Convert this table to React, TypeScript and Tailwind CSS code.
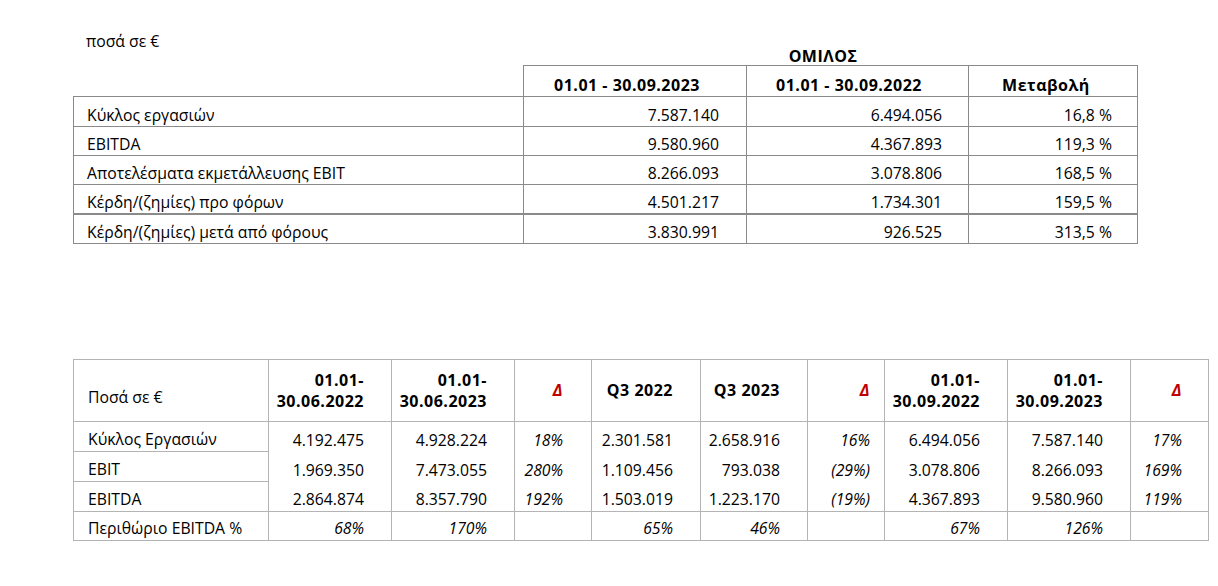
import React from "react";

interface GroupRow {
  label: string;
  cur: string;
  prev: string;
  change: string;
}

const groupRows: GroupRow[] = [
  { label: "Κύκλος εργασιών", cur: "7.587.140", prev: "6.494.056", change: "16,8 %" },
  { label: "EBITDA", cur: "9.580.960", prev: "4.367.893", change: "119,3 %" },
  { label: "Αποτελέσματα εκμετάλλευσης EBIT", cur: "8.266.093", prev: "3.078.806", change: "168,5 %" },
  { label: "Κέρδη/(ζημίες) προ φόρων", cur: "4.501.217", prev: "1.734.301", change: "159,5 %" },
  { label: "Κέρδη/(ζημίες) μετά από φόρους", cur: "3.830.991", prev: "926.525", change: "313,5 %" },
];

const rowHeights = ["h-[30px]", "h-[29px]", "h-[29px]", "h-[29px]", "h-[30px]"];

interface PeriodRow {
  label: string;
  values: string[];
}

// values: h1 2022, h1 2023, Δ, q3 2022, q3 2023, Δ, 9m 2022, 9m 2023, Δ
const periodRows: PeriodRow[] = [
  { label: "Κύκλος Εργασιών", values: ["4.192.475", "4.928.224", "18%", "2.301.581", "2.658.916", "16%", "6.494.056", "7.587.140", "17%"] },
  { label: "EBIT", values: ["1.969.350", "7.473.055", "280%", "1.109.456", "793.038", "(29%)", "3.078.806", "8.266.093", "169%"] },
  { label: "EBITDA", values: ["2.864.874", "8.357.790", "192%", "1.503.019", "1.223.170", "(19%)", "4.367.893", "9.580.960", "119%"] },
];

const marginRow = ["68%", "170%", "", "65%", "46%", "", "67%", "126%", ""];

const padRight = [
  "pr-[27px]", "pr-[27px]", "pr-[28px]",
  "pr-[27px]", "pr-[27px]", "pr-[14px]",
  "pr-[27px]", "pr-[27px]", "pr-[26px]",
];

const deltaCols = [2, 5, 8];

function GroupTable() {
  const cell = "border border-[#8a8a8a] align-bottom pb-[1px]";
  const head = "text-[16px] tracking-[0.5px] font-bold";
  return (
    <div>
      <div className={`ml-[523px] w-[613px] h-[18px] leading-[18px] text-center pr-[13px] ${head}`}>
        ΟΜΙΛΟΣ
      </div>
      <table className="ml-[73px] border-collapse table-fixed w-[1064px]">
        <colgroup>
          <col className="w-[450px]" />
          <col className="w-[223px]" />
          <col className="w-[222px]" />
          <col className="w-[169px]" />
        </colgroup>
        <thead>
          <tr className="h-[31px]">
            <th className="border-0 border-b border-[#8a8a8a]"></th>
            <th className={`${cell} text-center pr-[16px] ${head}`}>01.01 - 30.09.2023</th>
            <th className={`${cell} text-center pr-[17px] ${head}`}>01.01 - 30.09.2022</th>
            <th className={`${cell} text-center pr-[14px] ${head}`}>Μεταβολή</th>
          </tr>
        </thead>
        <tbody>
          {groupRows.map((r, i) => (
            <tr key={r.label} className={`${rowHeights[i]} ${i === 3 ? "border-b-2 border-[#7a7a7a]" : ""}`}>
              <td className={`${cell} text-left pl-[13px] ${i === 3 ? "border-b-2" : ""}`}>{r.label}</td>
              <td className={`${cell} text-right pr-[27px] ${i === 3 ? "border-b-2" : ""}`}>{r.cur}</td>
              <td className={`${cell} text-right pr-[26px] ${i === 3 ? "border-b-2" : ""}`}>{r.prev}</td>
              <td className={`${cell} text-right pr-[25px] ${i === 3 ? "border-b-2" : ""}`}>{r.change}</td>
            </tr>
          ))}
        </tbody>
      </table>
    </div>
  );
}

function PeriodTable() {
  const v = "border-l border-r border-[#b4b4b4]";
  const headers: React.ReactNode[] = [
    <>01.01-<br />30.06.2022</>,
    <>01.01-<br />30.06.2023</>,
    "Δ",
    "Q3 2022",
    "Q3 2023",
    "Δ",
    <>01.01-<br />30.09.2022</>,
    <>01.01-<br />30.09.2023</>,
    "Δ",
  ];
  return (
    <table className="ml-[73px] mt-[115px] border-collapse table-fixed w-[1135px] border border-[#b4b4b4]">
      <colgroup>
        <col className="w-[195px]" />
        <col className="w-[123px]" />
        <col className="w-[123px]" />
        <col className="w-[77px]" />
        <col className="w-[109px]" />
        <col className="w-[107px]" />
        <col className="w-[77px]" />
        <col className="w-[123px]" />
        <col className="w-[123px]" />
        <col className="w-[78px]" />
      </colgroup>
      <thead>
        <tr className="h-[62px] border-b border-[#b4b4b4]">
          <th className={`${v} text-left font-normal pl-[14px] pt-[12px] align-middle`}>Ποσά σε €</th>
          {headers.map((h, i) => (
            <th
              key={i}
              className={`${v} text-right align-middle font-bold text-[16px] tracking-[0.5px] leading-[21px] ${padRight[i]} ${
                deltaCols.includes(i) ? "italic text-[#c00000]" : ""
              }`}
            >
              {h}
            </th>
          ))}
        </tr>
      </thead>
      <tbody>
        {periodRows.map((r, ri) => (
          <tr key={r.label} className={`h-[30px] ${ri === 2 ? "border-b border-[#b4b4b4]" : ""}`}>
            <td className={`${v} border-b border-b-[#b4b4b4] text-left pl-[14px] align-bottom pb-[2px]`}>{r.label}</td>
            {r.values.map((val, i) => (
              <td
                key={i}
                className={`${v} text-right align-bottom pb-[2px] ${padRight[i]} ${deltaCols.includes(i) ? "italic" : ""}`}
              >
                {val}
              </td>
            ))}
          </tr>
        ))}
        <tr className="h-[29px]">
          <td className={`${v} text-left pl-[14px] align-bottom pb-[2px]`}>Περιθώριο EBITDA %</td>
          {marginRow.map((val, i) => (
            <td key={i} className={`${v} text-right italic align-bottom pb-[2px] ${padRight[i]}`}>
              {val}
            </td>
          ))}
        </tr>
      </tbody>
    </table>
  );
}

export default function App() {
  return (
    <div
      className="w-[1218px] h-[586px] bg-white text-black text-[15.75px] leading-[20px] pt-[31px]"
      style={{ fontFamily: '"Open Sans", "Noto Sans", sans-serif' }}
    >
      <div className="ml-[86px] h-[16px]">ποσά σε €</div>
      <GroupTable />
      <PeriodTable />
    </div>
  );
}
